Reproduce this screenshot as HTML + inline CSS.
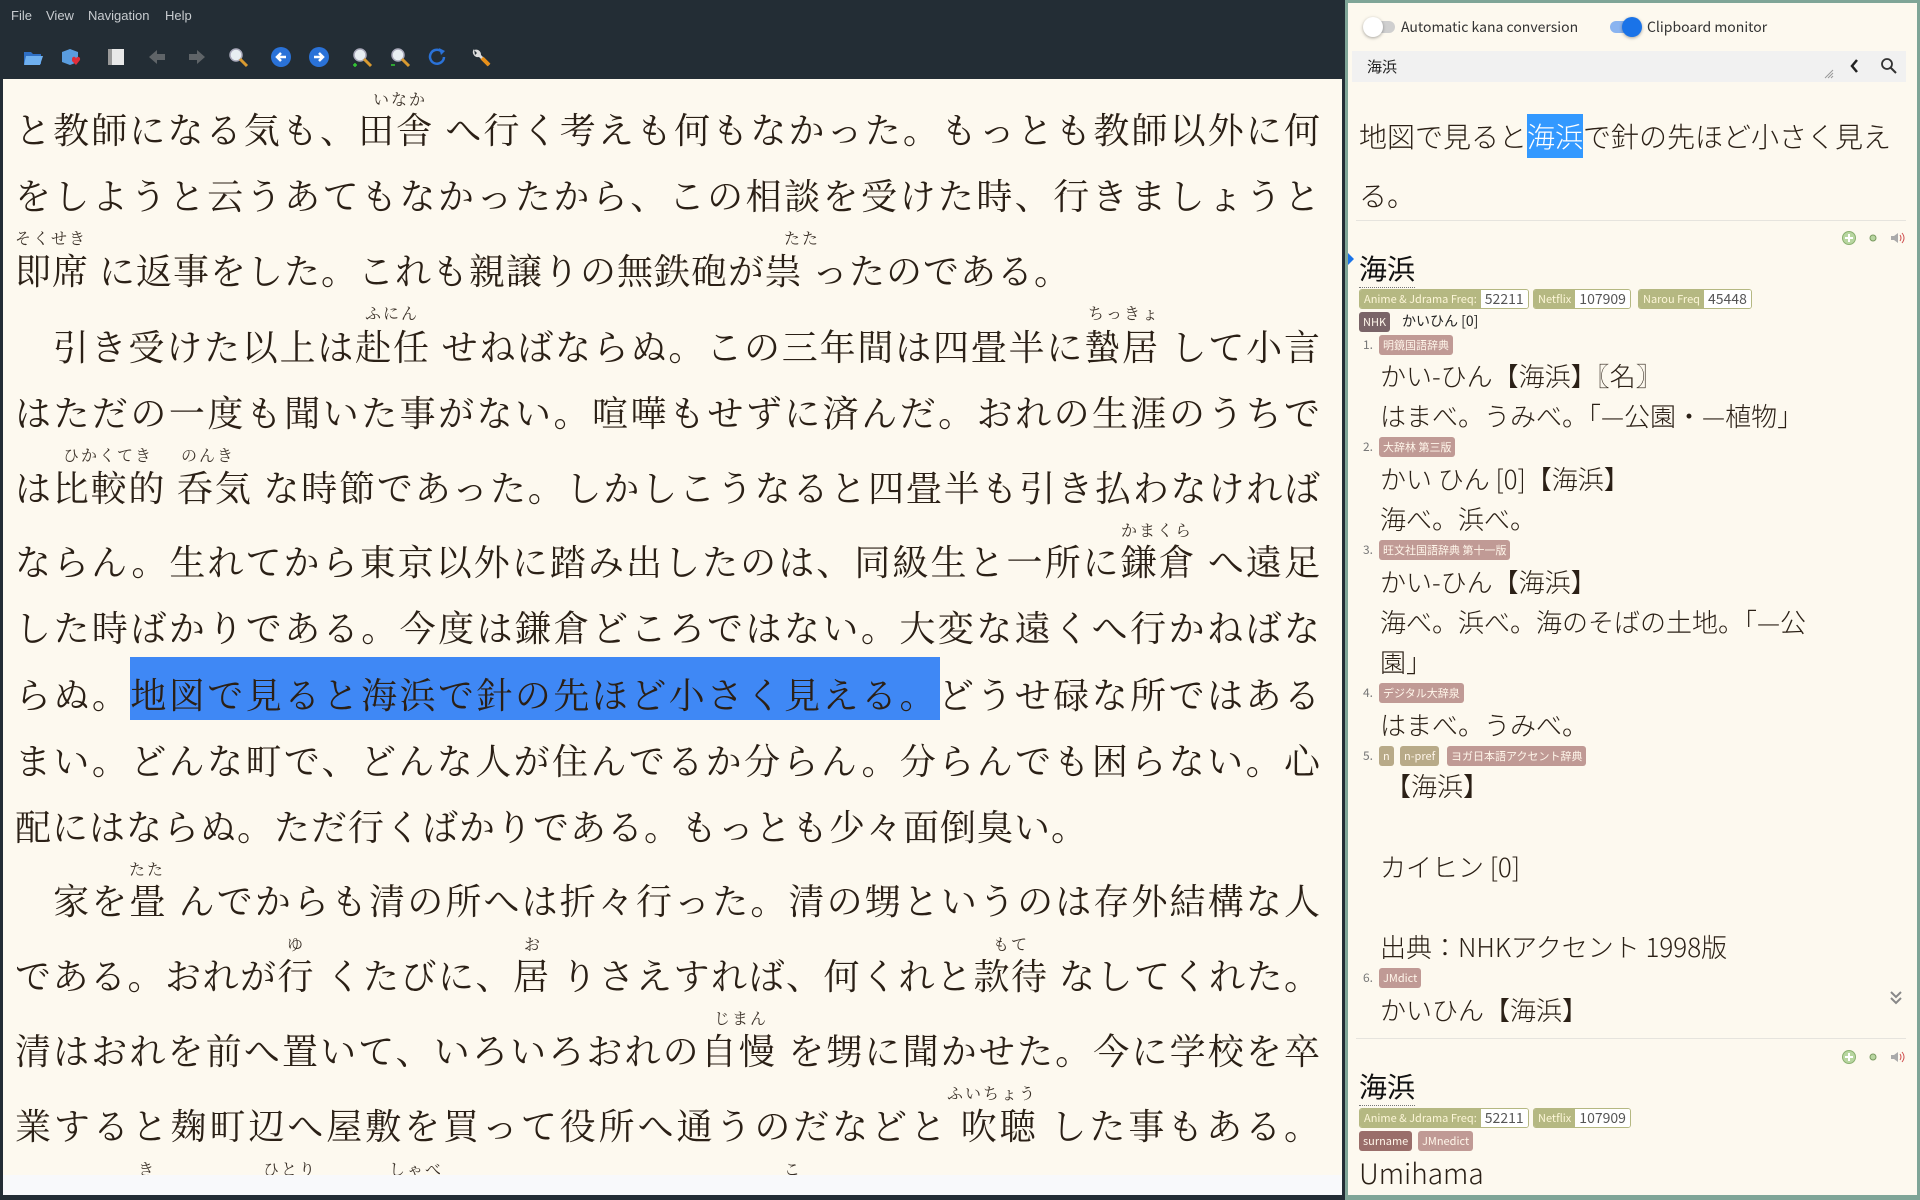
<!DOCTYPE html>
<html><head><meta charset="utf-8">
<style>
*{margin:0;padding:0;box-sizing:border-box}
body{width:1920px;height:1200px;background:#232d35;position:relative;overflow:hidden;font-family:"Liberation Sans","Noto Sans CJK JP",sans-serif}
.menu{position:absolute;top:8px;font-size:13px;color:#c8ccd0}
.ic{position:absolute;top:46px;width:22px;height:22px}
#left{position:absolute;left:3px;top:79px;width:1339px;height:1096px;background:#fdf9ef;overflow:hidden}
#lbot{position:absolute;left:3px;top:1175px;width:1339px;height:20px;background:#f8f9fb}
.ln{position:absolute;left:12px;width:1306px;height:50px;line-height:50px;font-family:"Liberation Serif","Noto Serif CJK SC",serif;font-size:36px;color:#2b2016;white-space:nowrap;letter-spacing:1px}
.j{text-align:justify;text-align-last:justify}
.rb{position:absolute;font-family:"Liberation Serif","Noto Serif CJK SC",serif;font-size:16px;color:#3a3027;transform:translateX(-50%);white-space:nowrap;letter-spacing:2px}
#hl{position:absolute;left:127px;top:578px;width:810px;height:63px;background:#3f88f5}
#right{position:absolute;left:1345px;top:0;width:575px;height:1200px;background:#7fa597}
#rin{position:absolute;left:3px;top:3px;width:569px;height:1192px;background:#fdf9ef;overflow:hidden;font-family:"Noto Sans CJK JP",sans-serif}
.a{position:absolute;white-space:nowrap}
.tg{position:absolute;height:20px;line-height:20px;font-size:11px;color:#fff6ea;border-radius:3px;padding:0 4px;white-space:nowrap}
.fq{position:absolute;height:20px;border:1px solid #b5b882;border-radius:3px;display:flex;font-size:11px;line-height:18px;white-space:nowrap;overflow:hidden}
.fq span:first-child{background:#b5b882;color:#fdf6d8;padding:0 4px}
.fq span:last-child{background:#fff;color:#555;padding:0 4px;font-size:14px}
.d{position:absolute;left:32px;font-size:26px;color:#2b2016;white-space:nowrap;line-height:34px;font-weight:300}
.num{position:absolute;left:15px;font-size:12px;color:#777;line-height:20px}
</style></head><body>
<div class="menu" style="left:11px">File</div>
<div class="menu" style="left:46px">View</div>
<div class="menu" style="left:88px">Navigation</div>
<div class="menu" style="left:165px">Help</div>

<svg class="ic" style="left:22px" viewBox="0 0 22 22"><path d="M2 6h7l2 2h8v10H2z" fill="#2f6fc4"/><path d="M4 10h17l-3 9H2z" fill="#6fb0f0"/></svg>
<svg class="ic" style="left:60px" viewBox="0 0 22 22"><path d="M2 6l8-3 8 3v10l-8 3-8-3z" fill="#5a9de0"/><path d="M12 13c0-3 4-3 4 0 0-3 5-3 4 1l-4 5-4-4z" fill="#e02d3a"/></svg>
<svg class="ic" style="left:105px" viewBox="0 0 22 22"><rect x="3" y="3" width="4" height="16" fill="#999"/><rect x="7" y="3" width="12" height="16" fill="#e8e8e8"/></svg>
<svg class="ic" style="left:146px" viewBox="0 0 22 22"><path d="M3 11l8-7v4h8v6h-8v4z" fill="#5f6468"/></svg>
<svg class="ic" style="left:186px" viewBox="0 0 22 22"><path d="M19 11l-8-7v4H3v6h8v4z" fill="#5f6468"/></svg>
<svg class="ic" style="left:227px" viewBox="0 0 22 22"><circle cx="9" cy="9" r="6" fill="#e8eef2" stroke="#aab" stroke-width="1.5"/><path d="M13 13l7 7" stroke="#d99a30" stroke-width="3"/></svg>
<svg class="ic" style="left:270px" viewBox="0 0 22 22"><circle cx="11" cy="11" r="10" fill="#2a72d8"/><path d="M16 11H7m4-4l-4 4 4 4" stroke="#fff" stroke-width="2.5" fill="none"/></svg>
<svg class="ic" style="left:308px" viewBox="0 0 22 22"><circle cx="11" cy="11" r="10" fill="#2a72d8"/><path d="M6 11h9m-4-4l4 4-4 4" stroke="#fff" stroke-width="2.5" fill="none"/></svg>
<svg class="ic" style="left:351px" viewBox="0 0 22 22"><circle cx="9" cy="9" r="6" fill="#e8eef2" stroke="#aab" stroke-width="1.5"/><path d="M13 13l7 7" stroke="#d99a30" stroke-width="3"/><path d="M2 19h4M4 17v4" stroke="#3c3" stroke-width="1.5"/></svg>
<svg class="ic" style="left:389px" viewBox="0 0 22 22"><circle cx="9" cy="9" r="6" fill="#e8eef2" stroke="#aab" stroke-width="1.5"/><path d="M13 13l7 7" stroke="#d99a30" stroke-width="3"/><path d="M2 19h4" stroke="#3c3" stroke-width="1.5"/></svg>
<svg class="ic" style="left:427px" viewBox="0 0 22 22"><path d="M17 11a7 7 0 1 1-3-6" stroke="#2a72d8" stroke-width="2.5" fill="none"/><path d="M12 2l6 3-4 4z" fill="#2a72d8"/></svg>
<svg class="ic" style="left:470px" viewBox="0 0 22 22"><path d="M4 3a5 5 0 0 0 5 8l9 9 2-2-9-9a5 5 0 0 0-7-5l3 3-2 2z" fill="#ddd"/><path d="M12 12l7 7" stroke="#e8901a" stroke-width="4"/></svg>

<div id="left">
<div id="hl"></div>
</div>
<div id="lbot"></div>

<div style="position:absolute;left:3px;top:79px;width:1339px;height:1096px;overflow:hidden">
<div class="ln j" style="top:27px">と教師になる気も、田舎 へ行く考えも何もなかった。もっとも教師以外に何</div>
<div class="rb" style="left:397px;top:8px">いなか</div>
<div class="ln j" style="top:93px">をしようと云うあてもなかったから、この相談を受けた時、行きましょうと</div>
<div class="rb" style="left:48px;top:147px">そくせき</div><div class="rb" style="left:799px;top:147px">たた</div>
<div class="ln" style="top:168px">即席 に返事をした。これも親譲りの無鉄砲が祟 ったのである。</div>
<div class="rb" style="left:389px;top:222px">ふにん</div><div class="rb" style="left:1121px;top:222px">ちっきょ</div>
<div class="ln j" style="top:244px">　引き受けた以上は赴任 せねばならぬ。この三年間は四畳半に蟄居 して小言</div>
<div class="ln j" style="top:310px">はただの一度も聞いた事がない。喧嘩もせずに済んだ。おれの生涯のうちで</div>
<div class="rb" style="left:105px;top:364px">ひかくてき</div><div class="rb" style="left:205px;top:364px">のんき</div>
<div class="ln j" style="top:385px">は比較的 呑気 な時節であった。しかしこうなると四畳半も引き払わなければ</div>
<div class="rb" style="left:1154px;top:439px">かまくら</div>
<div class="ln j" style="top:459px">ならん。生れてから東京以外に踏み出したのは、同級生と一所に鎌倉 へ遠足</div>
<div class="ln j" style="top:525px">した時ばかりである。今度は鎌倉どころではない。大変な遠くへ行かねばな</div>
<div class="ln j" style="top:592px">らぬ。地図で見ると海浜で針の先ほど小さく見える。どうせ碌な所ではある</div>
<div class="ln j" style="top:658px">まい。どんな町で、どんな人が住んでるか分らん。分らんでも困らない。心</div>
<div class="ln" style="top:724px">配にはならぬ。ただ行くばかりである。もっとも少々面倒臭い。</div>
<div class="rb" style="left:144px;top:778px">たた</div>
<div class="ln j" style="top:798px">　家を畳 んでからも清の所へは折々行った。清の甥というのは存外結構な人</div>
<div class="rb" style="left:293px;top:853px">ゆ</div><div class="rb" style="left:530px;top:853px">お</div><div class="rb" style="left:1008px;top:853px">もて</div>
<div class="ln j" style="top:873px">である。おれが行 くたびに、居 りさえすれば、何くれと款待 なしてくれた。</div>
<div class="rb" style="left:738px;top:927px">じまん</div>
<div class="ln j" style="top:948px">清はおれを前へ置いて、いろいろおれの自慢 を甥に聞かせた。今に学校を卒</div>
<div class="rb" style="left:989px;top:1002px">ふいちょう</div>
<div class="ln j" style="top:1023px">業すると麹町辺へ屋敷を買って役所へ通うのだなどと 吹聴 した事もある。</div>
<div class="rb" style="left:144px;top:1078px">き</div><div class="rb" style="left:287px;top:1078px">ひとり</div><div class="rb" style="left:413px;top:1078px">しゃべ</div><div class="rb" style="left:790px;top:1078px">こ</div>
</div>

<div id="right"><div id="rin">
<div class="a" style="left:19px;top:18px;width:28px;height:12px;border-radius:6px;background:#cfcfcf"></div>
<div class="a" style="left:15px;top:14px;width:20px;height:20px;border-radius:50%;background:#fff;box-shadow:0 1px 3px rgba(0,0,0,.35)"></div>
<div class="a" style="left:53px;top:14px;font-size:14px;color:#333">Automatic kana conversion</div>
<div class="a" style="left:262px;top:18px;width:28px;height:12px;border-radius:6px;background:#8ab4f0"></div>
<div class="a" style="left:274px;top:14px;width:20px;height:20px;border-radius:50%;background:#1a73e8;box-shadow:0 1px 3px rgba(0,0,0,.35)"></div>
<div class="a" style="left:299px;top:14px;font-size:14px;color:#333">Clipboard monitor</div>
<div class="a" style="left:4px;top:48px;width:554px;height:31px;background:#f1f1f1"></div>
<div class="a" style="left:19px;top:53px;font-size:15px;color:#222">海浜</div>
<svg class="a" style="left:476px;top:66px" width="10" height="10"><path d="M9 1L1 9M9 4L4 9M9 7L7 9" stroke="#999"/></svg>
<svg class="a" style="left:501px;top:55px" width="12" height="16"><path d="M8 2L3 8l5 6" stroke="#222" stroke-width="2.5" fill="none"/></svg>
<svg class="a" style="left:532px;top:54px" width="18" height="18"><circle cx="7" cy="7" r="5" stroke="#333" stroke-width="1.8" fill="none"/><path d="M11 11l5 5" stroke="#333" stroke-width="2"/></svg>
<div class="a" style="left:11px;top:113px;font-size:28px;line-height:40px;color:#2b2016;font-weight:300">地図で見ると<span style="color:#fff;background:#3399ff;padding:2px 0">海浜</span>で針の先ほど小さく見え</div>
<div class="a" style="left:11px;top:172px;font-size:28px;line-height:40px;color:#2b2016;font-weight:300">る。</div>
<div class="a" style="left:8px;top:217px;width:550px;height:1px;background:#e6e4de"></div>
<svg class="a" style="left:493px;top:227px" width="70" height="16"><circle cx="8" cy="8" r="6.5" fill="#b8d6a0" stroke="#8ab070"/><path d="M8 4v8M4 8h8" stroke="#fff" stroke-width="2"/><circle cx="32" cy="8" r="3" fill="#b8d6a0" stroke="#7a9a60"/><path d="M50 6h3l4-3v10l-4-3h-3z" fill="#aaa"/><path d="M59 5q2 3 0 6M61 3q4 5 0 10" stroke="#d05050" fill="none"/></svg>
<svg class="a" style="left:0;top:250px" width="6" height="12"><path d="M0 0l6 6-6 6z" fill="#1a73e8"/></svg>
<div class="a" style="left:11px;top:245px;font-size:28px;line-height:40px;color:#111">海浜</div>
<div class="a" style="left:11px;top:284px;width:56px;border-top:1px dotted #777"></div>
<div class="fq" style="left:11px;top:286px"><span>Anime &amp; Jdrama Freq:</span><span>52211</span></div>
<div class="fq" style="left:185px;top:286px"><span>Netflix</span><span>107909</span></div>
<div class="fq" style="left:290px;top:286px"><span>Narou Freq</span><span>45448</span></div>
<div class="tg" style="left:11px;top:309px;background:#7a6468;padding:0 4px">NHK</div>
<div class="a" style="left:54px;top:308px;font-size:14px;color:#222">かいひん [0]</div>
<div class="num" style="top:332px">1.</div><div class="tg" style="left:31px;top:332px;background:#c09a95">明鏡国語辞典</div>
<div class="d" style="top:356px">かい-ひん【海浜】〖名〗</div>
<div class="d" style="top:396px">はまべ。うみべ。「—公園・—植物」</div>
<div class="num" style="top:434px">2.</div><div class="tg" style="left:31px;top:434px;background:#c09a95">大辞林 第三版</div>
<div class="d" style="top:459px">かい ひん [0]【海浜】</div>
<div class="d" style="top:499px">海べ。浜べ。</div>
<div class="num" style="top:537px">3.</div><div class="tg" style="left:31px;top:537px;background:#c09a95">旺文社国語辞典 第十一版</div>
<div class="d" style="top:562px">かい-ひん【海浜】</div>
<div class="d" style="top:602px">海べ。浜べ。海のそばの土地。「—公</div>
<div class="d" style="top:642px">園」</div>
<div class="num" style="top:680px">4.</div><div class="tg" style="left:31px;top:680px;background:#c09a95">デジタル大辞泉</div>
<div class="d" style="top:705px">はまべ。うみべ。</div>
<div class="num" style="top:743px">5.</div>
<div class="tg" style="left:31px;top:743px;background:#b8aa88">n</div>
<div class="tg" style="left:52px;top:743px;background:#b8aa88">n-pref</div>
<div class="tg" style="left:99px;top:743px;background:#c09a95">ヨガ日本語アクセント辞典</div>
<div class="d" style="top:766px;left:37px">【海浜】</div>
<div class="d" style="top:847px">カイヒン [0]</div>
<div class="d" style="top:927px">出典：NHKアクセント 1998版</div>
<div class="num" style="top:965px">6.</div><div class="tg" style="left:31px;top:965px;background:#c09a95">JMdict</div>
<div class="d" style="top:990px">かいひん【海浜】</div>
<svg class="a" style="left:541px;top:987px" width="14" height="16"><path d="M2 2l5 5 5-5M2 8l5 5 5-5" stroke="#888" stroke-width="2" fill="none"/></svg>
<div class="a" style="left:8px;top:1035px;width:550px;height:1px;background:#e6e4de"></div>
<svg class="a" style="left:493px;top:1046px" width="70" height="16"><circle cx="8" cy="8" r="6.5" fill="#b8d6a0" stroke="#8ab070"/><path d="M8 4v8M4 8h8" stroke="#fff" stroke-width="2"/><circle cx="32" cy="8" r="3" fill="#b8d6a0" stroke="#7a9a60"/><path d="M50 6h3l4-3v10l-4-3h-3z" fill="#aaa"/><path d="M59 5q2 3 0 6M61 3q4 5 0 10" stroke="#d05050" fill="none"/></svg>
<div class="a" style="left:11px;top:1063px;font-size:28px;line-height:40px;color:#111">海浜</div>
<div class="a" style="left:11px;top:1102px;width:56px;border-top:1px dotted #777"></div>
<div class="fq" style="left:11px;top:1105px"><span>Anime &amp; Jdrama Freq:</span><span>52211</span></div>
<div class="fq" style="left:185px;top:1105px"><span>Netflix</span><span>107909</span></div>
<div class="tg" style="left:11px;top:1128px;background:#9a6e6a">surname</div>
<div class="tg" style="left:70px;top:1128px;background:#c09a95">JMnedict</div>
<div class="a" style="left:11px;top:1151px;font-size:28px;line-height:38px;color:#2b2016;font-weight:300">Umihama</div>
</div></div>
</body></html>
